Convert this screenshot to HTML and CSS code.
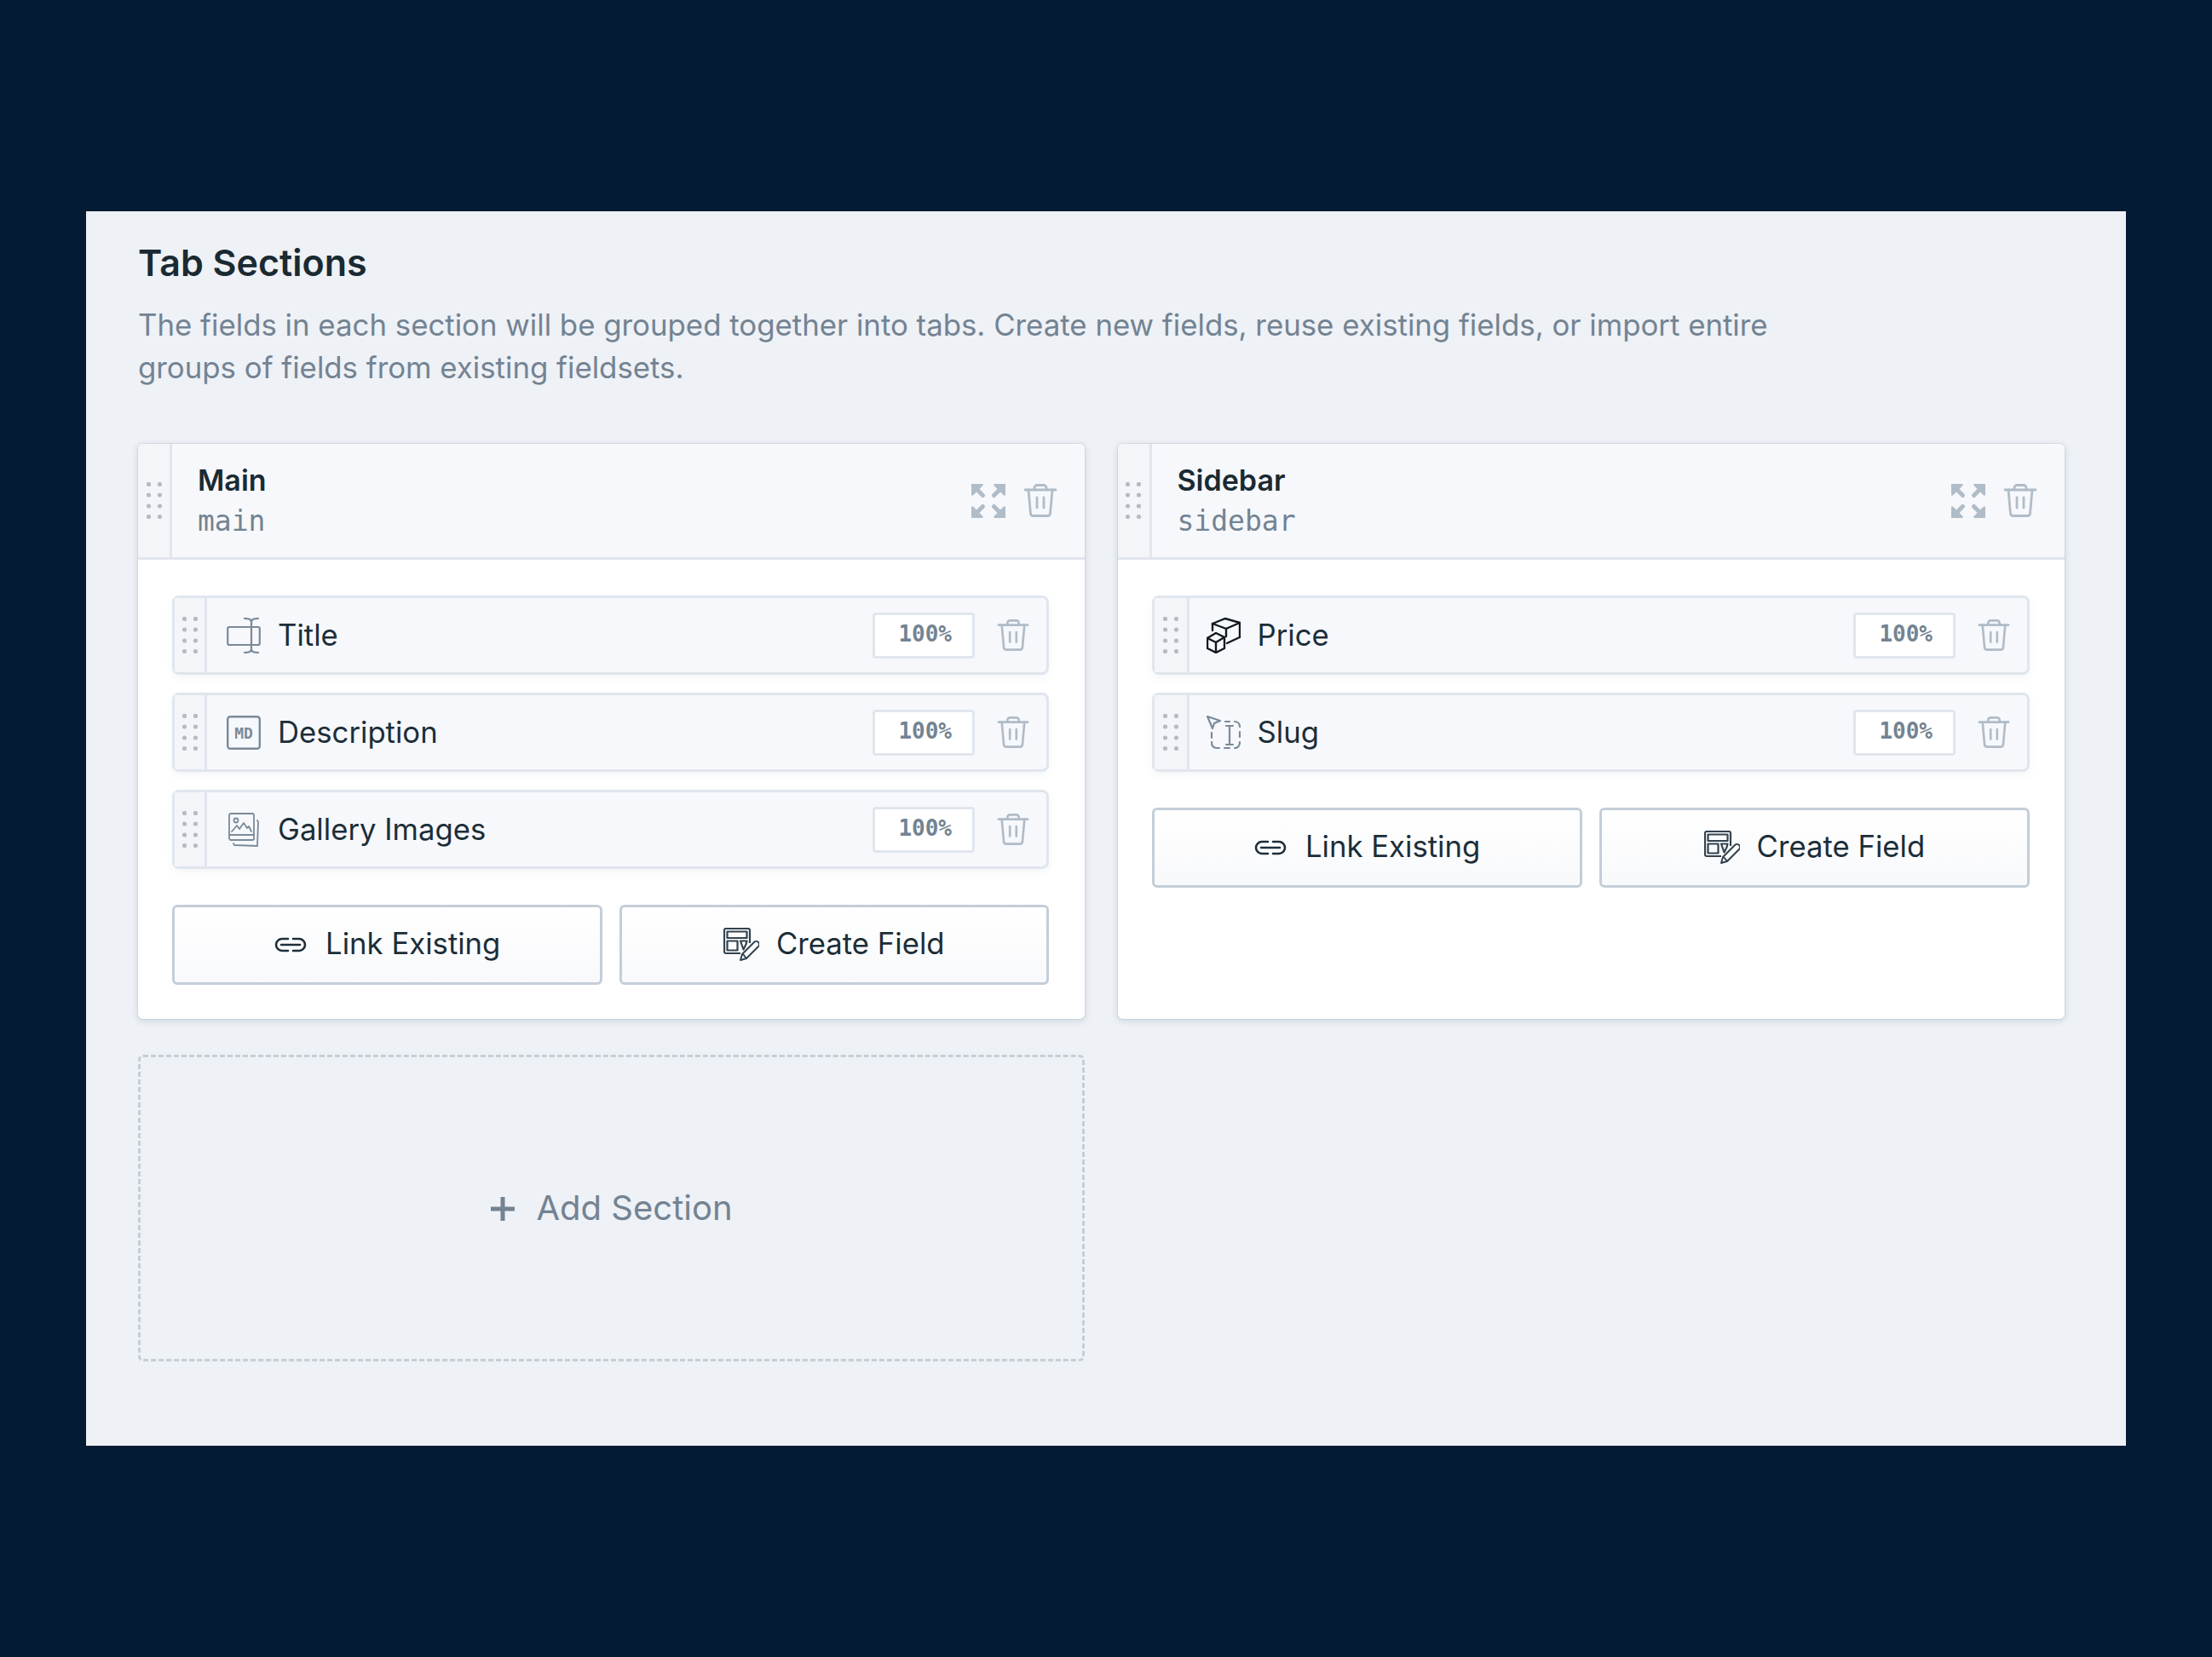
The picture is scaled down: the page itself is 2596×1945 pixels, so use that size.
FILE: index.html
```html
<!DOCTYPE html>
<html lang="en">
<head>
    <meta charset="UTF-8">
    <title>Tab Sections</title>
    <link rel="stylesheet" href="styles.css">
</head>
<body>
    <svg class="defs" width="0" height="0">
        <symbol id="dots" viewBox="0 0 18 43">
            <g fill="#b5bbc0">
                <circle cx="2.500" cy="2.500" r="2.600"/><circle cx="15.500" cy="2.500" r="2.600"/>
                <circle cx="2.500" cy="15" r="2.600"/><circle cx="15.500" cy="15" r="2.600"/>
                <circle cx="2.500" cy="28" r="2.600"/><circle cx="15.500" cy="28" r="2.600"/>
                <circle cx="2.500" cy="40.500" r="2.600"/><circle cx="15.500" cy="40.500" r="2.600"/>
            </g>
        </symbol>
        <symbol id="trash" viewBox="0 0 40 40">
            <g fill="none" stroke="currentColor" stroke-width="2.800" stroke-linecap="round" stroke-linejoin="round">
                <path d="M2 7h36"/>
                <path d="M13 7V4.500a3 3 0 0 1 3-3h8a3 3 0 0 1 3 3V7"/>
                <path d="M6 7l2.500 28a3 3 0 0 0 3 2.500h17a3 3 0 0 0 3-2.500L34 7"/>
                <path d="M16 16v12M24 16v12"/>
            </g>
        </symbol>
        <symbol id="expand" viewBox="0 0 40 40">
            <g fill="currentColor">
                <path d="M0 0h13.500v2L2 13.500H0z"/>
                <path d="M40 0H26.500v2L38 13.500H40z"/>
                <path d="M0 40h13.500v-2L2 26.500H0z"/>
                <path d="M40 40H26.500v-2L38 26.500H40z"/>
            </g>
            <path d="M5 5l8.500 8.500M35 5l-8.500 8.500M5 35l8.500-8.500M35 35l-8.500-8.500" fill="none" stroke="currentColor" stroke-width="5" stroke-linecap="round"/>
        </symbol>
        <symbol id="link" viewBox="0 0 40 20">
            <g fill="none" stroke="#1e2f3b" stroke-width="2.600" stroke-linecap="round">
                <path d="M17 3H10a7 7 0 0 0 0 14h7"/>
                <path d="M23 3h7a7 7 0 0 1 0 14h-7"/>
                <path d="M9 10h22"/>
            </g>
        </symbol>
        <symbol id="create" viewBox="0 0 42 40">
            <g fill="none" stroke="#33434f" stroke-width="2.200" stroke-linejoin="round">
                <path d="M20 30H3a2 2 0 0 1-2-2V3a2 2 0 0 1 2-2h26a2 2 0 0 1 2 2v15"/>
                <path d="M4.500 4.500h23v7.500h-23zM4.500 15.500h12v11h-12zM20 15.500h7.500l-1 4-3 6z"/>
                <path d="M20 38l2-7 14-14a3 3 0 0 1 5 5L27 36z" stroke-width="2"/>
                <path d="M23 31l4 5" stroke-width="2"/>
            </g>
        </symbol>
    </svg>

    <main class="frame">
        <h1 class="title">Tab Sections</h1>
        <p class="desc">The fields in each section will be grouped together into tabs. Create new fields, reuse existing fields, or import entire groups of fields from existing fieldsets.</p>

        <div class="sections">
            <section class="card">
                <header class="card-head">
                    <div class="card-drag"><svg class="dots"><use href="#dots"/></svg></div>
                    <div class="card-name">
                        <div class="name">Main</div>
                        <div class="handle">main</div>
                    </div>
                    <svg class="head-icon"><use href="#expand"/></svg>
                    <svg class="head-icon"><use href="#trash"/></svg>
                </header>
                <div class="card-body">
                    <div class="field">
                        <div class="field-drag"><svg class="dots"><use href="#dots"/></svg></div>
                        <svg class="field-icon" viewBox="0 0 40 42">
                            <g fill="none" stroke="#7b8a98" stroke-width="2.200" stroke-linecap="round" stroke-linejoin="round">
                                <rect x="1.200" y="11" width="37.600" height="21" rx="2"/>
                                <path d="M29 5v32M21 1c5 0 8 1 8 4 0-3 3-4 8-4M21 41c5 0 8-1 8-4 0 3 3 4 8 4"/>
                            </g>
                        </svg>
                        <span class="field-label">Title</span>
                        <span class="width">100%</span>
                        <svg class="field-trash"><use href="#trash"/></svg>
                    </div>
                    <div class="field">
                        <div class="field-drag"><svg class="dots"><use href="#dots"/></svg></div>
                        <svg class="field-icon" viewBox="0 0 40 40">
                            <rect x="1.200" y="1.200" width="37.600" height="37.600" rx="3" fill="none" stroke="#7b8a98" stroke-width="2.400"/>
                            <text class="md" x="20" y="27" text-anchor="middle">MD</text>
                        </svg>
                        <span class="field-label">Description</span>
                        <span class="width">100%</span>
                        <svg class="field-trash"><use href="#trash"/></svg>
                    </div>
                    <div class="field">
                        <div class="field-drag"><svg class="dots"><use href="#dots"/></svg></div>
                        <svg class="field-icon" viewBox="0 0 40 40">
                            <g fill="none" stroke="#7b8a98" stroke-width="1.800" stroke-linejoin="round" stroke-linecap="round">
                                <rect x="3" y="1" width="29" height="31" rx="2"/>
                                <path d="M3 26h29"/>
                                <circle cx="11" cy="9" r="2.500"/>
                                <path d="M6 22l6-7 3 4 5-7 4 6 2-2 3 6"/>
                                <path d="M36 9l1 2-1 28-27-1-1-2"/>
                            </g>
                        </svg>
                        <span class="field-label">Gallery Images</span>
                        <span class="width">100%</span>
                        <svg class="field-trash"><use href="#trash"/></svg>
                    </div>
                    <div class="actions">
                        <button class="btn" type="button"><svg class="btn-link"><use href="#link"/></svg>Link Existing</button>
                        <button class="btn" type="button"><svg class="btn-create"><use href="#create"/></svg>Create Field</button>
                    </div>
                </div>
            </section>

            <section class="card card-side">
                <header class="card-head">
                    <div class="card-drag"><svg class="dots"><use href="#dots"/></svg></div>
                    <div class="card-name">
                        <div class="name">Sidebar</div>
                        <div class="handle">sidebar</div>
                    </div>
                    <svg class="head-icon"><use href="#expand"/></svg>
                    <svg class="head-icon"><use href="#trash"/></svg>
                </header>
                <div class="card-body">
                    <div class="field">
                        <div class="field-drag"><svg class="dots"><use href="#dots"/></svg></div>
                        <svg class="field-icon" viewBox="0 0 40 42">
                            <g fill="none" stroke="#10191f" stroke-width="2.400" stroke-linecap="round" stroke-linejoin="round">
                                <path d="M7 15V7l15-6 17 5v17l-15 7"/>
                                <path d="M7 7l16 6 16-7M23 13v9"/>
                                <path d="M1 24l10-6 10 5v13l-10 5-10-5z"/>
                                <path d="M1 24l10 5 10-6M11 29v12"/>
                            </g>
                        </svg>
                        <span class="field-label">Price</span>
                        <span class="width">100%</span>
                        <svg class="field-trash"><use href="#trash"/></svg>
                    </div>
                    <div class="field">
                        <div class="field-drag"><svg class="dots"><use href="#dots"/></svg></div>
                        <svg class="field-icon" viewBox="0 0 40 40">
                            <g fill="none" stroke="#7b8a98" stroke-width="2.200" stroke-linecap="round" stroke-linejoin="round">
                                <path d="M1 1l15 5-7 3-2 6z"/>
                                <path d="M6 20v6M6 31c0 4 2 7 6 7h3M21 38h6M33 38c3 0 6-2 6-7M39 25v-6M39 13c0-4-3-6-6-6M27 7h-5"/>
                                <path d="M23 12h8M27 12v22M23 34h8"/>
                            </g>
                        </svg>
                        <span class="field-label">Slug</span>
                        <span class="width">100%</span>
                        <svg class="field-trash"><use href="#trash"/></svg>
                    </div>
                    <div class="actions">
                        <button class="btn" type="button"><svg class="btn-link"><use href="#link"/></svg>Link Existing</button>
                        <button class="btn" type="button"><svg class="btn-create"><use href="#create"/></svg>Create Field</button>
                    </div>
                </div>
            </section>

            <button class="add-section" type="button">
                <svg class="plus" viewBox="0 0 30 30"><path d="M15 1v28M1 15h28" fill="none" stroke="#738392" stroke-width="5"/></svg>
                Add Section
            </button>
        </div>
    </main>
</body>
</html>
```

FILE: styles.css
```css
* {
    box-sizing: border-box;
}
body {
    margin: 0;
    padding: 248px 101px;
    height: 1945px;
    background-color: #031c33;
    font-family: Inter, "Liberation Sans", sans-serif;
    color: #1c2e38;
}
.defs {
    position: absolute;
}
.frame {
    height: 1449px;
    padding: 32px 72px 0 61px;
    background-color: #eef1f6;
}
.title {
    margin: 0;
    font-size: 43px;
    line-height: 56px;
    font-weight: 600;
    color: #1a2a32;
}
.desc {
    margin: 20px 0 0;
    max-width: 1950px;
    font-size: 34.8px;
    line-height: 50px;
    color: #738392;
}
.sections {
    display: grid;
    grid-template-columns: 1111px 1111px;
    column-gap: 38.5px;
    row-gap: 42px;
    margin-top: 65px;
}
.card {
    background-color: white;
    border-radius: 6px;
    box-shadow: 0 0 0 1px rgba(40, 70, 98, 0.08), 0 2px 8px rgba(40, 70, 98, 0.18);
    overflow: hidden;
}
.card-head {
    display: flex;
    align-items: center;
    height: 136px;
    padding-right: 32px;
    background-color: #f6f8fc;
    border-bottom: 3px solid #e0e6ed;
}
.card-drag {
    display: flex;
    align-items: center;
    justify-content: center;
    align-self: stretch;
    width: 40px;
    background-color: #f3f5f9;
    border-right: 3px solid #e0e6ed;
}
.dots {
    width: 18px;
    height: 43px;
}
.card-name {
    flex: 1;
    padding-left: 30px;
}
.name {
    font-size: 34px;
    line-height: 48px;
    font-weight: 600;
    color: #1a2a32;
}
.handle {
    font-family: "DejaVu Sans Mono", monospace;
    font-size: 33px;
    line-height: 48px;
    color: #738392;
}
.head-icon {
    width: 40px;
    height: 40px;
    margin-left: 21px;
    color: #b0bcc7;
}
.card-body {
    padding: 42px 42px 40px 40px;
}
.card-side .card-body {
    padding-right: 40.5px;
}
.field {
    display: flex;
    align-items: center;
    height: 93px;
    margin-bottom: 21px;
    padding-right: 20px;
    background-color: #f6f8fc;
    border: 3px solid #e0e6ed;
    border-radius: 8px;
    box-shadow: 0 4px 10px rgba(40, 70, 98, 0.05);
}
.field-drag {
    display: flex;
    align-items: center;
    justify-content: center;
    align-self: stretch;
    width: 38px;
    background-color: #f3f5f9;
    border-right: 3px solid #e0e6ed;
}
.card-side .field-drag {
    width: 41px;
}
.field-icon {
    width: 40px;
    height: 42px;
    margin-left: 23px;
}
.card-side .field-icon {
    margin-left: 20px;
}
.md {
    font-family: "DejaVu Sans Mono", monospace;
    font-size: 18px;
    font-weight: 700;
    fill: #7b8a98;
}
.field-label {
    flex: 1;
    margin-left: 20px;
    padding-bottom: 2px;
    font-size: 34.7px;
}
.width {
    width: 120px;
    height: 54px;
    padding-right: 24px;
    background-color: white;
    border: 3px solid #e0e6ed;
    border-radius: 4px;
    font-family: "DejaVu Sans Mono", monospace;
    font-size: 26px;
    line-height: 44px;
    font-weight: 700;
    text-align: right;
    color: #738392;
}
.field-trash {
    width: 38px;
    height: 40px;
    margin-left: 26px;
    color: #b0bcc7;
}
.actions {
    display: grid;
    grid-template-columns: 1fr 1fr;
    column-gap: 20px;
    margin-top: 42px;
}
.btn {
    display: flex;
    align-items: center;
    justify-content: center;
    height: 94px;
    padding-bottom: 5px;
    background: linear-gradient(#ffffff, #f8f9fb);
    border: 3px solid #c4ced8;
    border-radius: 6px;
    font-family: inherit;
    font-size: 34.7px;
    color: #1c2e38;
}
.btn-link {
    width: 40px;
    height: 20px;
    margin-right: 21px;
    margin-top: 4px;
}
.btn-create {
    width: 42px;
    height: 40px;
    margin-right: 20px;
    margin-top: 4px;
}
.add-section {
    display: flex;
    align-items: center;
    justify-content: center;
    height: 360px;
    padding-bottom: 3px;
    background: none;
    border: 3px dashed #c4ced8;
    border-radius: 6px;
    font-family: inherit;
    font-size: 40px;
    color: #738392;
}
.plus {
    width: 30px;
    height: 30px;
    margin-right: 24px;
    margin-top: 3px;
}
```
